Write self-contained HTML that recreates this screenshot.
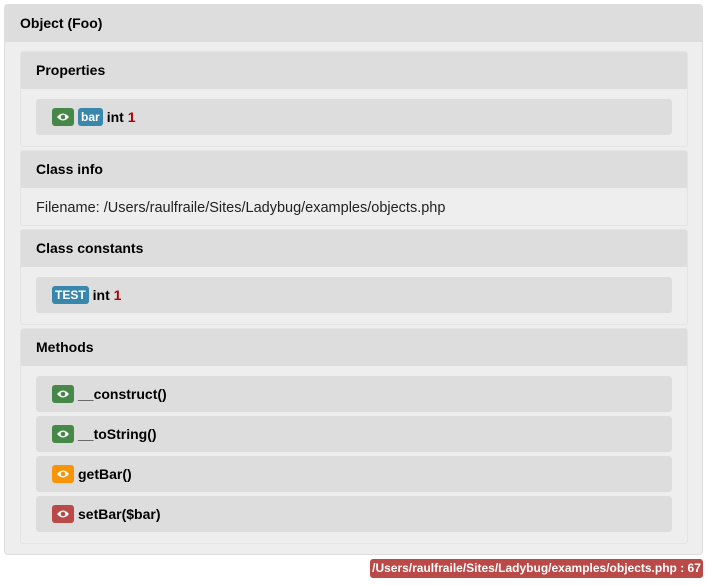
<!DOCTYPE html>
<html><head><style>
body{margin:0;width:710px;height:585px;background:#fff;font-family:"Liberation Sans",Arial,sans-serif;font-size:14px;color:#000;position:relative}
.outer{position:absolute;left:4px;top:4px;width:699px;height:551px;background:#eee;border:1px solid #ddd;border-radius:4px;box-sizing:border-box;overflow:hidden}
.hd{background:#ddd;height:37px;line-height:37px;padding-left:15px;font-weight:bold;font-size:14px}
.sec{position:absolute;left:15px;width:668px;background:#eee;border:1px solid #e4e4e4;border-radius:3px;box-sizing:border-box;overflow:hidden}
.row{position:absolute;left:15px;width:636px;height:36px;background:#ddd;border-radius:3px;line-height:36px;padding-left:16px;box-sizing:border-box;font-weight:bold}
.b{display:inline-block;height:18px;line-height:18px;border-radius:3px;color:#fff;font-size:12px;font-weight:bold;vertical-align:middle;margin-top:-3px;padding:0 3px;margin-right:4px}
.eye{width:22px;padding:0;text-align:center}
.g{background:#468847}.o{background:#f89406}.r{background:#b94a48}.bl{background:#3a87ad}
.n{color:#b20000}
svg{vertical-align:middle;margin-top:-2px}
</style></head><body>
<div class="outer">
<div class="hd">Object (Foo)</div>
<div class="sec" style="top:46px;height:96px">
 <div class="hd">Properties</div>
 <div class="row" style="top:47px"><span class="b eye g"><svg width="14" height="10" viewBox="0 0 14 10"><path d="M1 5Q7-2 13 5Q7 12 1 5Z" fill="#fff"/><circle cx="7" cy="5" r="2.3" fill="#468847"/></svg></span><span class="b bl">bar</span>int <span class="n">1</span></div>
</div>
<div class="sec" style="top:145px;height:76px">
 <div class="hd">Class info</div>
 <div style="padding-left:15px;line-height:40px;font-size:14.5px;color:#222">Filename: /Users/raulfraile/Sites/Ladybug/examples/objects.php</div>
</div>
<div class="sec" style="top:224px;height:96px">
 <div class="hd">Class constants</div>
 <div class="row" style="top:47px"><span class="b bl">TEST</span>int <span class="n">1</span></div>
</div>
<div class="sec" style="top:323px;height:216px">
 <div class="hd">Methods</div>
 <div class="row" style="top:47px"><span class="b eye g"><svg width="14" height="10" viewBox="0 0 14 10"><path d="M1 5Q7-2 13 5Q7 12 1 5Z" fill="#fff"/><circle cx="7" cy="5" r="2.3" fill="#468847"/></svg></span>__construct()</div>
 <div class="row" style="top:87px"><span class="b eye g"><svg width="14" height="10" viewBox="0 0 14 10"><path d="M1 5Q7-2 13 5Q7 12 1 5Z" fill="#fff"/><circle cx="7" cy="5" r="2.3" fill="#468847"/></svg></span>__toString()</div>
 <div class="row" style="top:127px"><span class="b eye o"><svg width="14" height="10" viewBox="0 0 14 10"><path d="M1 5Q7-2 13 5Q7 12 1 5Z" fill="#fff"/><circle cx="7" cy="5" r="2.3" fill="#f89406"/></svg></span>getBar()</div>
 <div class="row" style="top:167px"><span class="b eye r"><svg width="14" height="10" viewBox="0 0 14 10"><path d="M1 5Q7-2 13 5Q7 12 1 5Z" fill="#fff"/><circle cx="7" cy="5" r="2.3" fill="#b94a48"/></svg></span>setBar($bar)</div>
</div>
</div>
<div style="position:absolute;left:370px;top:559px;width:333px;height:19px;background:#b94a48;border-radius:3px;color:#fff;font-weight:bold;font-size:12px;line-height:19px;text-align:center;letter-spacing:0px">/Users/raulfraile/Sites/Ladybug/examples/objects.php : 67</div>
</body></html>
